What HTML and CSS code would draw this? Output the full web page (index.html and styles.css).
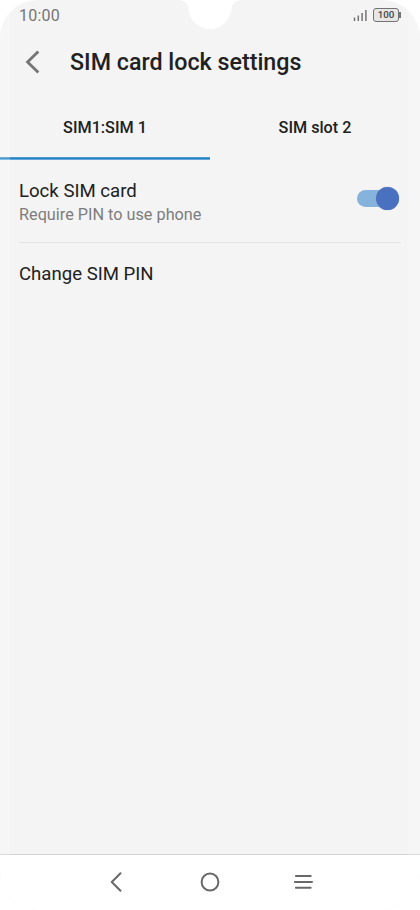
FILE: index.html
```html
<!DOCTYPE html>
<html lang="en">
<head>
<meta charset="utf-8">
<title>SIM card lock settings</title>
<link rel="stylesheet" href="styles.css">
</head>
<body>
<div class="phone">
  <header class="status">
    <span class="time">10:00</span>
    <div class="indicators">
      <svg class="signal" width="14" height="12" viewBox="0 0 14 12"><path d="M1.500 12V8.500M5.300 12V6.400M9.100 12V4M12.900 12V1" stroke="#747474" stroke-width="1.500"/></svg>
      <div class="battery">100</div>
    </div>
  </header>
  <svg class="notch" width="64" height="29" viewBox="0 0 64 29"><path d="M0 0C7 .5 10 3 10.500 9C12 21 20.500 29 32 29S52 21 53.500 9C54 3 57 .5 64 0Z" fill="#fff"/></svg>
  <div class="titlebar">
    <svg class="back" width="16" height="24" viewBox="0 0 16 24"><path d="M14.300 1.500L3.600 12L14.300 22.500" fill="none" stroke="#777" stroke-width="2.900"/></svg>
    <h1>SIM card lock settings</h1>
  </div>
  <nav class="tabs">
    <div class="tab active">SIM1:SIM 1</div>
    <div class="tab">SIM slot 2</div>
  </nav>
  <main class="list">
    <div class="row lock">
      <div>
        <div class="label">Lock SIM card</div>
        <div class="sub">Require PIN to use phone</div>
      </div>
      <div class="switch"><div class="knob"></div></div>
    </div>
    <div class="row change"><div class="label">Change SIM PIN</div></div>
  </main>
  <footer class="navbar">
    <svg width="20" height="20" viewBox="0 0 20 20"><path d="M14.500 1.300L5.800 10L14.500 18.700" /></svg>
    <svg width="20" height="20" viewBox="0 0 20 20"><circle cx="10" cy="10" r="8.400"/></svg>
    <svg width="20" height="20" viewBox="0 0 20 20"><path d="M2.900 4H17.700M1.900 10H19M2.900 15.800H17.700"/></svg>
  </footer>
  <div class="edge left"></div>
  <div class="edge right"></div>
</div>
</body>
</html>
```
FILE: styles.css
```css
* { box-sizing: border-box; }
body { margin: 0; background: #fff; font-family: Roboto, sans-serif; color: #212121; }
.phone {
  position: relative;
  width: 420px;
  height: 910px;
  display: flex;
  flex-direction: column;
  overflow: hidden;
  background: #f4f4f4;
  border-radius: 38px;
}
.status {
  height: 30px;
  padding: 0 21px 0 19px;
  display: flex;
  justify-content: space-between;
  align-items: center;
}
.time { padding-top: 1px; font-size: 16px; letter-spacing: .25px; line-height: 30px; color: #757575; }
.indicators { display: flex; align-items: center; gap: 6px; }
.battery {
  position: relative;
  width: 26px;
  height: 14px;
  border: 1.5px solid #747474;
  border-radius: 3px;
  background: #e6e6e6;
  font-size: 9.8px;
  font-weight: 500;
  line-height: 12px;
  text-align: center;
  color: #444;
}
.battery::after {
  content: "";
  position: absolute;
  right: -3px;
  top: 3px;
  width: 2px;
  height: 6px;
  background: #747474;
}
.notch { position: absolute; left: 178px; top: 0; }
.titlebar {
  height: 65px;
  padding-left: 24px;
  display: flex;
  align-items: center;
}
.back { margin-right: 30px; margin-top: -2px; }
h1 { margin: 0; font-size: 23.25px; font-weight: 500; line-height: 29px; white-space: nowrap; }
.tabs { height: 65px; display: flex; }
.tab {
  width: 210px;
  height: 65px;
  text-align: center;
  font-size: 16.2px;
  font-weight: 500;
  line-height: 65px;
}
.tab.active {
  background: linear-gradient(#4a9ad2 0 1px, #2580c4 1px 2px, #65a9d8 2px 3px) bottom / 100% 3px no-repeat;
}
.list { flex: 1; padding: 0 19px; }
.lock {
  height: 83px;
  padding-top: 18px;
  display: flex;
  justify-content: space-between;
  border-bottom: 1px solid #e3e3e3;
}
.label { padding-top: 1px; font-size: 18.6px; line-height: 25px; }
.sub { font-size: 16.25px; line-height: 21px; color: #7d7d7d; }
.switch {
  position: relative;
  width: 42px;
  height: 17px;
  margin: 12px 2px 0 0;
  border-radius: 9px;
  background: #86b3dc;
}
.knob {
  position: absolute;
  right: 0;
  top: -3px;
  width: 23px;
  height: 23px;
  border-radius: 50%;
  background: #4a70c0;
  box-shadow: 0 0 1px #8b9bbb;
}
.change { padding-top: 18px; }
.navbar {
  height: 56px;
  padding: 0 107px 2px 106px;
  display: flex;
  justify-content: space-between;
  align-items: center;
  background: #fff;
  border-top: 1px solid #d2d2d2;
}
.navbar svg { fill: none; stroke: #686868; stroke-width: 2; stroke-linecap: round; stroke-linejoin: round; }
.edge { position: absolute; top: 0; bottom: 0; width: 10px; background: rgba(255, 255, 255, .2); }
.left { left: 0; }
.right { right: 0; width: 12px; }
```
